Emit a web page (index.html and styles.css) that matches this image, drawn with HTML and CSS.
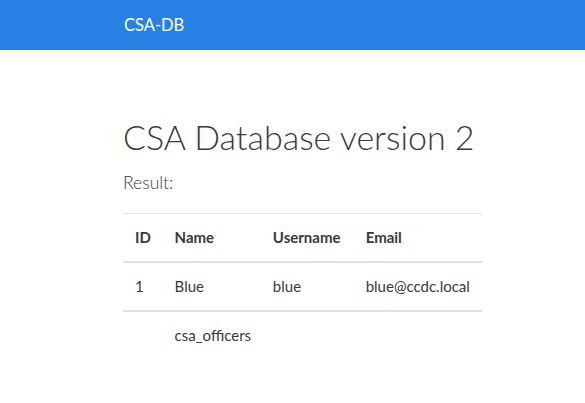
FILE: index.html
```html
<!DOCTYPE html>
<html lang="en">
<head>
<meta charset="utf-8">
<title>CSA-DB</title>
<link rel="stylesheet" href="styles.css">
</head>
<body>
<nav class="navbar">
  <div class="navbar-inner">
    <a class="brand" href="#">CSA-DB</a>
  </div>
</nav>
<main class="content">
  <h1 class="title">CSA Database version 2</h1>
  <p class="lead">Result:</p>
  <table class="results">
    <colgroup>
      <col class="c-id"><col class="c-name"><col class="c-user"><col class="c-email">
    </colgroup>
    <thead>
      <tr><th>ID</th><th>Name</th><th>Username</th><th>Email</th></tr>
    </thead>
    <tbody>
      <tr><td>1</td><td>Blue</td><td>blue</td><td>blue@ccdc.local</td></tr>
    </tbody>
    <tbody>
      <tr><td></td><td>csa_officers</td><td></td><td></td></tr>
    </tbody>
  </table>
</main>
</body>
</html>
```

FILE: styles.css
```css
html, body {
  margin: 0;
  padding: 0;
}
body {
  font-family: Lato, "Liberation Sans", sans-serif;
  font-size: 16px;
  line-height: 1.5;
  color: #373a3c;
  background: #ffffff;
}
.navbar {
  background: #2780e3;
  height: 50px;
  display: flex;
  align-items: center;
}
.navbar-inner {
  padding-left: 124px;
}
.brand {
  color: #ffffff;
  text-decoration: none;
  font-size: 16.5px;
  line-height: 1.5;
}
.content {
  padding: 67px 0 0 123px;
}
.title {
  margin: 0;
  font-size: 34px;
  font-weight: 300;
  line-height: 1.2;
  color: #373a3c;
  white-space: nowrap;
}
.lead {
  margin: 12px 0 0;
  font-size: 17.5px;
  font-weight: 300;
  line-height: 1.5;
}
.results {
  margin-top: 17px;
  width: 359px;
  border-collapse: collapse;
  table-layout: fixed;
  font-size: 15px;
}
.c-id { width: 29px; }
.c-name { width: 72px; }
.c-user { width: 68px; }
.c-email { width: 94px; }
.results th,
.results td {
  padding: 12px;
  text-align: left;
  line-height: 23px;
  border-top: 1px solid #dee2e6;
  white-space: nowrap;
}
.results th {
  font-weight: 700;
  border-bottom: 2px solid #dee2e6;
}
.results tbody + tbody {
  border-top: 2px solid #dee2e6;
}
.results tbody + tbody td {
  border-top: 2px solid #dee2e6;
}
```
